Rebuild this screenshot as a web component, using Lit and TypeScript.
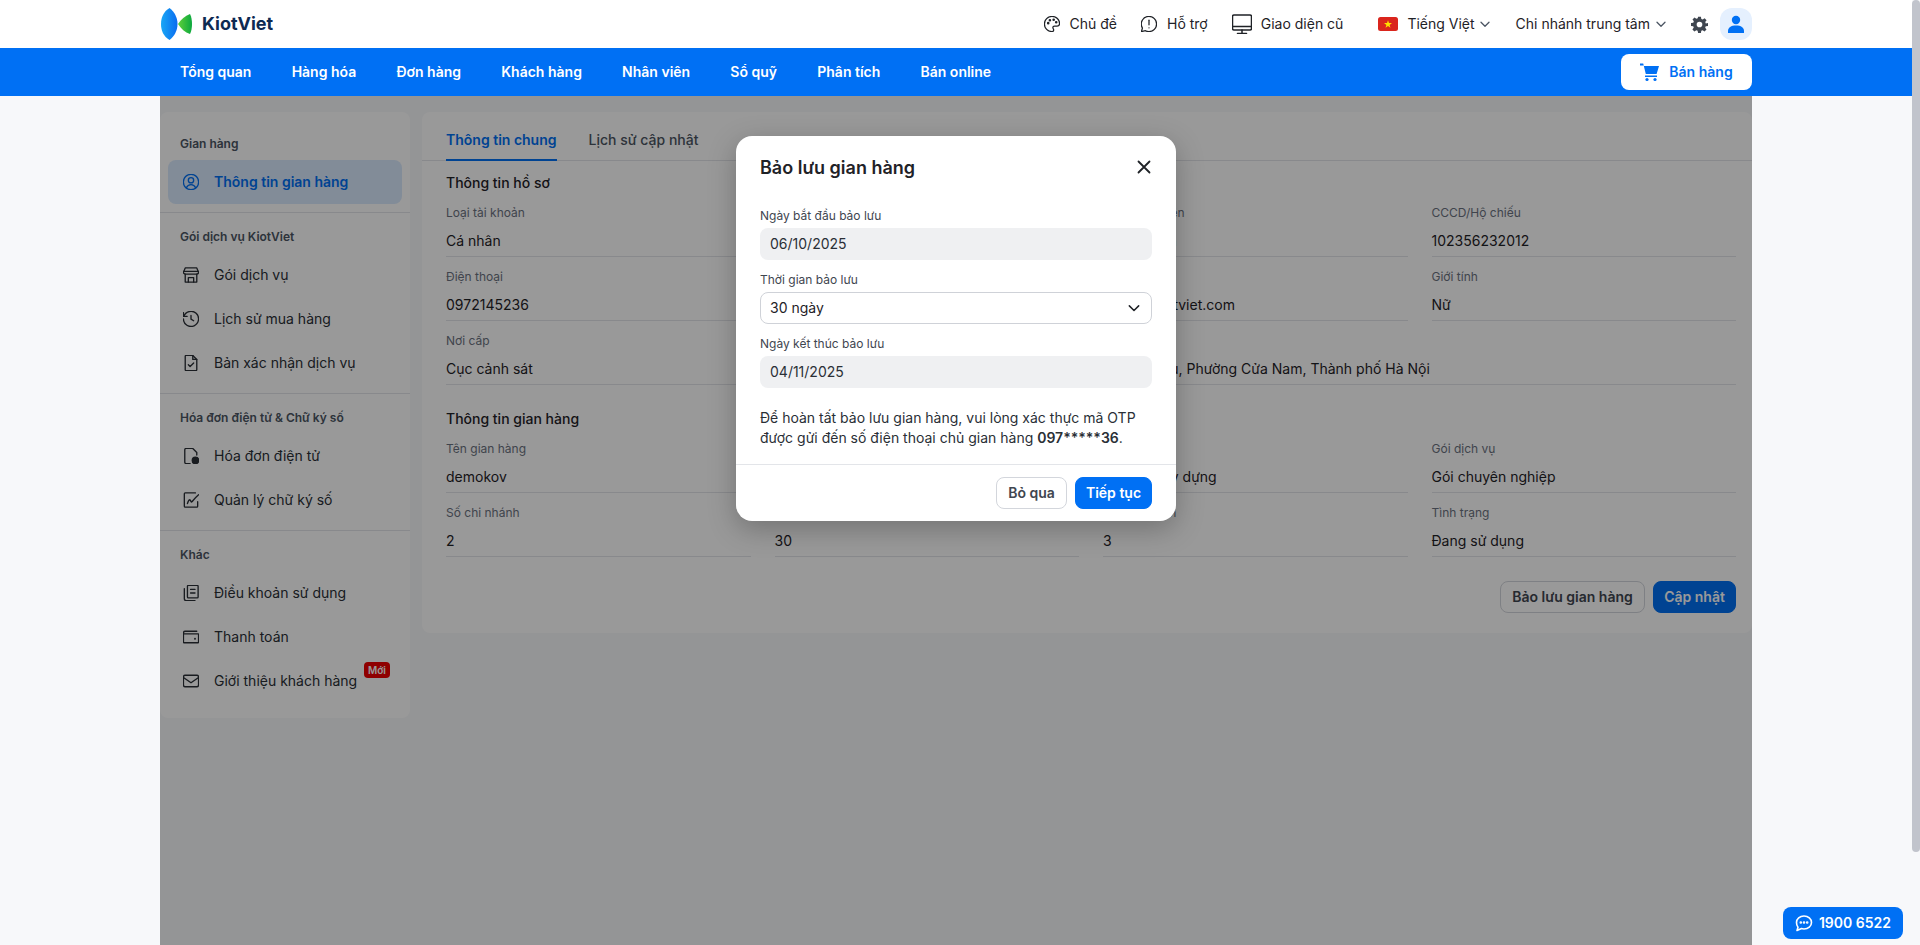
import { LitElement, html, css, svg } from "lit";
import { customElement } from "lit/decorators.js";

const ic = (body: unknown, size = 16, vb = "3 3 18 18") => html`<svg class="ic" width=${size} height=${size} viewBox=${vb} fill="none" stroke="currentColor" stroke-width="1.500" stroke-linecap="round" stroke-linejoin="round">${body}</svg>`;

const icons: Record<string, unknown> = {
  user: svg`<circle cx="12" cy="12" r="8.600"/><circle cx="12" cy="10" r="3"/><path d="M6.800 18.500c1-2.300 2.900-3.500 5.200-3.500s4.200 1.200 5.200 3.500"/>`,
  store: svg`<path d="M5.500 4h13l2 5c0 1.200-1 2-2.200 2H5.700c-1.200 0-2.200-.8-2.200-2z"/><path d="M3.500 8h17"/><path d="M5.500 11v9h13v-9"/><path d="M9 20v-5h6v5"/>`,
  history: svg`<path d="M4 9a8.500 8.500 0 1 1-.5 3"/><path d="M3.500 4.800V9h4.200"/><path d="M12 8v4.200l3 1.800"/>`,
  doc: svg`<path d="M14 3.500H6.500a1 1 0 0 0-1 1v15a1 1 0 0 0 1 1h11a1 1 0 0 0 1-1V8z"/><path d="M14 3.500V8h4.500"/><path d="M9 14l2 2 4-4"/>`,
  invoice: svg`<path d="M11 20.500H6.500a1.500 1.500 0 0 1-1.500-1.500V5a1.500 1.500 0 0 1 1.500-1.500H14L18.500 8v3"/><circle cx="17" cy="17" r="3.600" fill="currentColor"/>`,
  sign: svg`<path d="M19.500 14v5a1 1 0 0 1-1 1h-13a1 1 0 0 1-1-1V5a1 1 0 0 1 1-1h11.500"/><path d="M8 16c1-3 2-5 3-4s1 3 2 2 4-5 7.500-8"/>`,
  terms: svg`<path d="M9 3.500h10a1 1 0 0 1 1 1v12a1 1 0 0 1-1 1H9a1 1 0 0 1-1-1v-12a1 1 0 0 1 1-1z"/><path d="M4.500 7v11.500a2 2 0 0 0 2 2h10"/><path d="M11.500 8h5M11.500 12h5"/>`,
  wallet: svg`<path d="M18.500 5.500h-13a2 2 0 0 0-2 2V18a.5.5 0 0 0 .5.5h16a.5.5 0 0 0 .5-.5V9a.5.5 0 0 0-.5-.5H3.500"/><circle cx="16.500" cy="14" r=".4"/>`,
  mail: svg`<rect x="3.500" y="5.500" width="17" height="13" rx="2"/><path d="M3.500 8l8.500 6 8.500-6"/>`,
  palette: svg`<path d="M12 3a9 9 0 1 0 0 18c1.500 0 2-1 2-2 0-1.200-1-1.500-1-2.800 0-1 .8-1.700 2-1.700h3c1.800 0 3-1.200 3-3C21 6.500 17 3 12 3z"/><circle cx="7.500" cy="11" r=".8"/><circle cx="9.500" cy="7.500" r=".8"/><circle cx="14" cy="7" r=".8"/><circle cx="17" cy="10" r=".8"/>`,
  help: svg`<path d="M12 3a9 9 0 0 1 0 18c-1.500 0-3-.3-4.200-1L3 21l1.200-4.300A9 9 0 0 1 12 3z"/><path d="M12 7.500v5.500"/><path d="M12 16.500v.1"/>`,
  monitor: svg`<rect x="2.500" y="3" width="19" height="15" rx="1.500"/><path d="M2.500 14.500h19"/><path d="M12 18v3"/><path d="M7.500 21.500h9"/>`,
};

const chevron = (s = 12) => html`<svg class="ic" width=${s} height=${s} viewBox="0 0 12 12" fill="none" stroke="currentColor" stroke-width="1.300" stroke-linecap="round" stroke-linejoin="round"><path d="M2 4.200 6 8.200l4-4"/></svg>`;

type Field = { l: string; v: string; span?: number };
const profile: Field[] = [
  { l: "Loại tài khoản", v: "Cá nhân" }, { l: "Họ và tên", v: "Nguyễn Thu Hà" }, { l: "Người đại diện", v: "Nguyễn Hà" }, { l: "CCCD/Hộ chiếu", v: "102356232012" },
  { l: "Điện thoại", v: "0972145236" }, { l: "Ngày sinh", v: "12/05/1990" }, { l: "Email", v: "demo@kiotviet.com" }, { l: "Giới tính", v: "Nữ" },
  { l: "Nơi cấp", v: "Cục cảnh sát" }, { l: "Ngày cấp", v: "01/01/2021" }, { l: "Địa chỉ", v: "25 Bà Triệu, Phường Cửa Nam, Thành phố Hà Nội", span: 2 },
];
const shop: Field[] = [
  { l: "Tên gian hàng", v: "demokov" }, { l: "Địa chỉ truy cập", v: "demokov.kiotviet.vn" }, { l: "Ngành hàng", v: "Vật liệu xây dựng" }, { l: "Gói dịch vụ", v: "Gói chuyên nghiệp" },
  { l: "Số chi nhánh", v: "2" }, { l: "Số ngày sử dụng", v: "30" }, { l: "Số nhân viên", v: "3" }, { l: "Tình trạng", v: "Đang sử dụng" },
];
const groups: { h: string; items: { i: string; t: string; active?: boolean; badge?: string }[] }[] = [
  { h: "Gian hàng", items: [{ i: "user", t: "Thông tin gian hàng", active: true }] },
  { h: "Gói dịch vụ KiotViet", items: [{ i: "store", t: "Gói dịch vụ" }, { i: "history", t: "Lịch sử mua hàng" }, { i: "doc", t: "Bản xác nhận dịch vụ" }] },
  { h: "Hóa đơn điện tử & Chữ ký số", items: [{ i: "invoice", t: "Hóa đơn điện tử" }, { i: "sign", t: "Quản lý chữ ký số" }] },
  { h: "Khác", items: [{ i: "terms", t: "Điều khoản sử dụng" }, { i: "wallet", t: "Thanh toán" }, { i: "mail", t: "Giới thiệu khách hàng", badge: "Mới" }] },
];
const nav = ["Tổng quan", "Hàng hóa", "Đơn hàng", "Khách hàng", "Nhân viên", "Sổ quỹ", "Phân tích", "Bán online"];

@customElement("app-root")
export class AppRoot extends LitElement {
  static styles = css`
    :host { display: block; font-family: Inter, "Noto Sans", sans-serif; font-size: 14px; line-height: 20px; color: #1f2227; }
    * { box-sizing: border-box; }
    .ic { display: block; flex: none; }
    .shell { display: flex; height: 945px; overflow: hidden; background: #f7f8fa; position: relative; }
    .page { flex: 1; min-width: 0; display: flex; flex-direction: column; }
    .scrollbar { flex: none; width: 8px; background: #f7f8fa; }
    .thumb { height: 852px; background: #c1c4cc; border-radius: 4px; }
    .top { height: 48px; flex: none; background: #fff; padding: 0 160px; display: flex; align-items: center; justify-content: space-between; }
    .logo { display: flex; align-items: center; gap: 10px; font-size: 18px; font-weight: 700; color: #0e2a52; }
    .tools { display: flex; align-items: center; color: #1f2227; }
    .tool { display: flex; align-items: center; gap: 10px; }
    .t-help { margin-left: 24px; }
    .t-mon { margin-left: 24px; gap: 9px; }
    .t-lang { margin-left: 35px; gap: 9px; }
    .t-lang svg:last-child { margin-left: -5px; color: #4b5563; }
    .t-branch svg:last-child { margin-left: -2px; color: #4b5563; }
    .t-branch { margin-left: 25px; gap: 7px; }
    .gear { margin-left: 24px; color: #3f4650; }
    .avatar { margin-left: 12px; width: 32px; height: 32px; border-radius: 12px; background: #e5f0fe; color: #0070f4; display: flex; align-items: center; justify-content: center; }
    .nav { height: 48px; flex: none; background: #0070f4; padding: 0 160px 0 180px; display: flex; align-items: center; gap: 40.2px; color: #fff; font-weight: 600; }
    .sell { margin-left: auto; width: 131px; height: 36px; background: #fff; color: #0070f4; border-radius: 8px; display: flex; align-items: center; justify-content: center; gap: 9px; }
    .body { flex: 1; padding: 0 160px; min-height: 0; }
    .wrap { position: relative; height: 100%; display: flex; align-items: flex-start; gap: 12px; padding-top: 16px; }
    .side { width: 250px; flex: none; background: #fff; border-radius: 8px; padding: 24px 0 15px; }
    .side hr { border: 0; height: 1px; background: #e3e5e9; margin: 8px 0 16px; }
    .gh { padding-left: 20px; font-size: 12px; line-height: 16px; font-weight: 600; color: #4b5563; margin-bottom: 8px; }
    .item { position: relative; height: 44px; margin: 0 8px; padding-left: 15px; border-radius: 8px; display: flex; align-items: center; gap: 15px; color: #2a2f36; }
    .item.on { background: #d9e9fd; color: #0070f4; font-weight: 600; }
    .badge { position: absolute; left: 196px; top: 3px; height: 16px; width: 26px; border-radius: 4px; background: #e00; color: #fff; font-size: 10px; line-height: 16px; font-weight: 600; text-align: center; }
    .card { flex: 1; min-width: 0; background: #fff; border-radius: 8px; padding-bottom: 20px; }
    .tabs { height: 49px; border-bottom: 1px solid #e3e5e9; padding: 0 24px; display: flex; gap: 32px; color: #4b5563; font-weight: 500; }
    .tab { height: 48px; padding-top: 18px; }
    .tab.on { color: #0070f4; font-weight: 600; border-bottom: 2px solid #0070f4; height: 49px; }
    .sec { padding: 12px 16px 0 24px; }
    .sec + .sec { padding-top: 24px; }
    .sh { font-weight: 500; color: #1f2227; margin-bottom: 12px; }
    .grid { display: grid; grid-template-columns: repeat(4, 1fr); column-gap: 24px; row-gap: 12px; }
    .f label { display: block; font-size: 12px; line-height: 16px; color: #6b7280; margin-bottom: 4px; }
    .f div { height: 32px; line-height: 32px; border-bottom: 1px solid #e3e5e9; color: #1f2227; }
    .span2 { grid-column: span 2; }
    .acts { display: flex; justify-content: flex-end; gap: 8px; margin: 24px 16px 0 0; }
    .btn { height: 32px; border-radius: 8px; display: flex; align-items: center; justify-content: center; font-weight: 600; border: 1px solid #d3d6dc; background: #fff; color: #3f4650; }
    .btn.pri { background: #0070f4; border-color: #0070f4; color: #fff; }
    .b-keep { width: 145px; } .b-save { width: 83px; }
    .overlay { position: absolute; inset: 0; background: rgba(0, 0, 0, .4); display: flex; justify-content: center; align-items: flex-start; padding-top: 40px; }
    .modal { width: 440px; height: 385px; background: #fff; border-radius: 16px; box-shadow: 0 8px 28px rgba(0, 0, 0, .25); display: flex; flex-direction: column; }
    .mh { display: flex; justify-content: space-between; padding: 20px 23px 0 24px; height: 72px; font-size: 18px; line-height: 24px; font-weight: 600; align-items: flex-start; }
    .x { margin-top: 2px; color: #1f2227; }
    .mb { padding: 0 24px; flex: 1; }
    .ml { font-size: 12px; line-height: 16px; color: #3f4650; margin-bottom: 4px; }
    .inp { height: 32px; border-radius: 8px; background: #eff0f2; padding: 0 10px; line-height: 32px; color: #2a2f36; margin-bottom: 12px; }
    .inp.sel { background: #fff; border: 1px solid #cfd2d8; line-height: 30px; padding: 0 9px; display: flex; align-items: center; justify-content: space-between; color: #1f2227; }
    .inp.sel svg { margin-right: 1px; }
    .note { margin-top: 20px; color: #2a2f36; }
    .note b { font-weight: 600; }
    .mf { border-top: 1px solid #e3e5e9; height: 57px; padding: 12px 24px; display: flex; justify-content: flex-end; gap: 8px; }
    .b-skip { width: 71px; } .b-next { width: 77px; }
    .phone { position: absolute; right: 17px; bottom: 6px; width: 120px; height: 32px; border-radius: 8px; background: #0070f4; color: #fff; font-weight: 600; display: flex; align-items: center; justify-content: center; gap: 6px; }
  `;

  private field(f: Field) {
    return html`<div class="f ${f.span ? "span2" : ""}"><label>${f.l}</label><div>${f.v}</div></div>`;
  }

  render() {
    return html`
      <div class="shell">
        <div class="page">
          <header class="top">
            <div class="logo">
              <svg width="32" height="32" viewBox="0 0 32 32">
                <defs>
                  <linearGradient id="lb" x1="0" y1="0" x2="1" y2="0"><stop offset="0" stop-color="#1aa7f5"/><stop offset="1" stop-color="#0a6cf0"/></linearGradient>
                  <linearGradient id="lg" x1="0" y1="0" x2="1" y2="0"><stop offset="0" stop-color="#5fd03a"/><stop offset="1" stop-color="#0ba83e"/></linearGradient>
                </defs>
                <path d="M9.500 0C3.500 3.500 1 9.500 1 16s2.500 12.500 8.500 16C14.500 28 17.500 22.500 17.500 16S14.500 4 9.500 0z" fill="url(#lb)"/>
                <path d="M30 6C25 8 21 11.500 18 16c3 4.500 7 8.500 12 10 1.500-3 2-6.500 2-10s-.5-7-2-10z" fill="url(#lg)"/>
              </svg>
              <span>KiotViet</span>
            </div>
            <div class="tools">
              <div class="tool">${ic(icons.palette, 16, "2.5 2.5 19 19")}<span>Chủ đề</span></div>
              <div class="tool t-help">${ic(icons.help, 16, "2.5 2.5 19 19")}<span>Hỗ trợ</span></div>
              <div class="tool t-mon">${ic(icons.monitor, 20, "2 2 20 20")}<span>Giao diện cũ</span></div>
              <div class="tool t-lang">
                <svg width="20" height="14" viewBox="0 0 20 14"><rect width="20" height="14" rx="2.500" fill="#da251d"/><path d="M10 3.200l1 2.900h3l-2.400 1.800.9 2.900L10 9l-2.500 1.800.9-2.900L6 6.100h3z" fill="#ffdf00"/></svg>
                <span>Tiếng Việt</span>${chevron()}
              </div>
              <div class="tool t-branch"><span>Chi nhánh trung tâm</span>${chevron()}</div>
              <svg class="ic gear" width="17" height="17" viewBox="0 0 24 24" fill="currentColor"><path fill-rule="evenodd" d="M10 1h4l.6 3.200 1.900.8 2.700-1.900 2.800 2.800-1.900 2.700.8 1.900L24 10v4l-3.200.6-.8 1.900 1.900 2.700-2.800 2.800-2.700-1.900-1.900.8L14 24h-4l-.6-3.200-1.900-.8-2.700 1.900-2.800-2.800 1.900-2.700-.8-1.900L0 14v-4l3.200-.6.800-1.900L2.100 4.800l2.800-2.800 2.700 1.900 1.900-.8zM12 8a4 4 0 1 0 0 8 4 4 0 0 0 0-8z"/></svg>
              <div class="avatar"><svg width="16" height="18" viewBox="0 0 16 18" fill="currentColor"><circle cx="8" cy="5" r="4.200"/><path d="M0 18v-2c0-3.500 3-5.500 8-5.500s8 2 8 5.500v2z"/></svg></div>
            </div>
          </header>
          <nav class="nav">
            ${nav.map((n) => html`<span>${n}</span>`)}
            <div class="sell">
              <svg width="20" height="20" viewBox="0 0 20 20" fill="currentColor"><path d="M0 1.500h3.200l.7 2.500H19l-2.400 8H5.800L3.700 3.500H0z"/><rect x="5" y="13.500" width="12" height="1.500"/><circle cx="7" cy="17.500" r="1.600"/><circle cx="15" cy="17.500" r="1.600"/></svg>
              <span>Bán hàng</span>
            </div>
          </nav>
          <div class="body">
            <div class="wrap">
              <aside class="side">
                ${groups.map((g, i) => html`
                  ${i ? html`<hr />` : ""}
                  <div class="gh">${g.h}</div>
                  ${g.items.map((it) => html`<div class="item ${it.active ? "on" : ""}">${ic(icons[it.i], 16)}<span>${it.t}</span>${it.badge ? html`<span class="badge">${it.badge}</span>` : ""}</div>`)}
                `)}
              </aside>
              <section class="card">
                <div class="tabs"><div class="tab on">Thông tin chung</div><div class="tab">Lịch sử cập nhật</div></div>
                <div class="sec"><div class="sh">Thông tin hồ sơ</div><div class="grid">${profile.map((f) => this.field(f))}</div></div>
                <div class="sec"><div class="sh">Thông tin gian hàng</div><div class="grid">${shop.map((f) => this.field(f))}</div></div>
                <div class="acts"><div class="btn b-keep">Bảo lưu gian hàng</div><div class="btn pri b-save">Cập nhật</div></div>
              </section>
              <div class="overlay">
                <div class="modal">
                  <div class="mh"><span>Bảo lưu gian hàng</span>
                    <svg class="x" width="18" height="18" viewBox="0 0 18 18" fill="none" stroke="currentColor" stroke-width="1.800" stroke-linecap="round"><path d="M3.500 3.500l11 11M14.500 3.500l-11 11"/></svg>
                  </div>
                  <div class="mb">
                    <div class="ml">Ngày bắt đầu bảo lưu</div>
                    <div class="inp">06/10/2025</div>
                    <div class="ml">Thời gian bảo lưu</div>
                    <div class="inp sel"><span>30 ngày</span>${chevron(14)}</div>
                    <div class="ml">Ngày kết thúc bảo lưu</div>
                    <div class="inp">04/11/2025</div>
                    <div class="note">Để hoàn tất bảo lưu gian hàng, vui lòng xác thực mã OTP được gửi đến số điện thoại chủ gian hàng <b>097*****36</b>.</div>
                  </div>
                  <div class="mf"><div class="btn b-skip">Bỏ qua</div><div class="btn pri b-next">Tiếp tục</div></div>
                </div>
              </div>
            </div>
          </div>
        </div>
        <div class="scrollbar"><div class="thumb"></div></div>
        <div class="phone">
          <svg width="18" height="18" viewBox="0 0 18 18" fill="none" stroke="currentColor" stroke-width="1.600" stroke-linejoin="round"><path d="M9 2c4.200 0 7.500 2.800 7.500 6.500S13.200 15 9 15c-.9 0-1.700-.1-2.500-.4L2 16.500l1-3.300C2 12 1.500 10.300 1.500 8.500 1.500 4.800 4.800 2 9 2z"/><circle cx="5.800" cy="8.500" r=".5" fill="currentColor"/><circle cx="9" cy="8.500" r=".5" fill="currentColor"/><circle cx="12.200" cy="8.500" r=".5" fill="currentColor"/></svg>
          <span>1900 6522</span>
        </div>
      </div>
    `;
  }
}
